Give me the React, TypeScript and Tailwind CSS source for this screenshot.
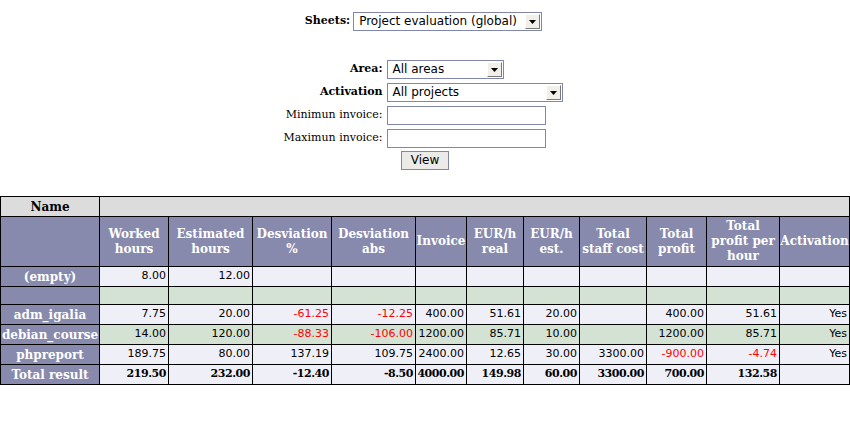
import React from "react";

const serif = "font-['DejaVu_Serif',serif]";
const sans = "font-['DejaVu_Sans',sans-serif]";

function Arrow() {
    return (
        <div className="flex h-full w-[15px] shrink-0 items-center justify-center border border-t-white border-l-white border-r-[#7a7a7a] border-b-[#7a7a7a] bg-[#f1efea]">
            <svg width="7" height="4" viewBox="0 0 7 4">
                <polygon points="0,0 7,0 3.5,4" fill="#000" />
            </svg>
        </div>
    );
}

function FakeSelect({ value, width }: { value: string; width: string }) {
    return (
        <div className={`flex h-[19px] ${width} items-stretch border border-[#7f87ad] bg-white p-px`}>
            <span className={`flex-1 pl-[4px] text-[12px] leading-[15px] text-black ${sans}`}>{value}</span>
            <Arrow />
        </div>
    );
}

const cols = ["Worked hours", "Estimated hours", "Desviation %", "Desviation abs", "Invoice", "EUR/h real", "EUR/h est.", "Total staff cost", "Total profit", "Total profit per hour", "Activation"];

const rows = [
    { name: "(empty)", green: false, h: "h-[20px]", vals: ["8.00", "12.00", "", "", "", "", "", "", "", "", ""] },
    { name: "", green: true, h: "h-[18px]", vals: ["", "", "", "", "", "", "", "", "", "", ""] },
    { name: "adm_igalia", green: false, h: "h-[20px]", vals: ["7.75", "20.00", "-61.25", "-12.25", "400.00", "51.61", "20.00", "", "400.00", "51.61", "Yes"] },
    { name: "debian_course", green: true, h: "h-[20px]", vals: ["14.00", "120.00", "-88.33", "-106.00", "1200.00", "85.71", "10.00", "", "1200.00", "85.71", "Yes"] },
    { name: "phpreport", green: false, h: "h-[20px]", vals: ["189.75", "80.00", "137.19", "109.75", "2400.00", "12.65", "30.00", "3300.00", "-900.00", "-4.74", "Yes"] },
];

const totals = ["219.50", "232.00", "-12.40", "-8.50", "4000.00", "149.98", "60.00", "3300.00", "700.00", "132.58", ""];

const cell = "border-r border-b border-black";
const slate = "bg-[#878aad]";

export default function App() {
    return (
        <div className="w-[850px] min-h-[442px] bg-white text-black">
            {/* sheet selector */}
            <div className="flex items-center justify-center gap-[3px] pt-[12px] pr-[3px]">
                <span className={`text-[11px] font-bold ${serif}`}>Sheets:</span>
                <FakeSelect value="Project evaluation (global)" width="w-[189px]" />
            </div>

            {/* filters */}
            <div className="mt-[29px] flex justify-center">
                <div className="grid grid-cols-[95px_176px] gap-x-[4px] gap-y-[4px] items-center">
                    <span className={`flex justify-end whitespace-nowrap text-[11px] font-bold ${serif}`}>Area:</span>
                    <FakeSelect value="All areas" width="w-[117px]" />
                    <span className={`flex justify-end whitespace-nowrap text-[11px] font-bold ${serif}`}>Activation</span>
                    <FakeSelect value="All projects" width="w-[176px]" />
                    <span className={`flex justify-end whitespace-nowrap text-[11px] ${serif}`}>Minimun invoice:</span>
                    <input className="h-[19px] w-[159px] border border-[#7f87ad] bg-white outline-none" />
                    <span className={`flex justify-end whitespace-nowrap text-[11px] ${serif}`}>Maximun invoice:</span>
                    <input className="h-[19px] w-[159px] border border-[#7f87ad] bg-white outline-none" />
                    <div className="col-span-2 -mt-[1px] flex justify-center">
                        <button className={`h-[19px] w-[48px] border border-[#7f87ad] bg-[#ecebe8] text-[12px] leading-[15px] ${sans}`}>View</button>
                    </div>
                </div>
            </div>

            {/* results */}
            <div className={`mt-[26px] grid w-[850px] grid-cols-[99px_69px_84px_79px_84px_51px_57px_56px_67px_60px_73px_70px] border-l border-t border-black text-[11px] ${sans}`}>
                <div className={`${cell} flex h-[20px] items-center justify-center bg-[#dcdcdc] text-[12px] font-bold ${serif}`}>Name</div>
                <div className={`${cell} col-span-11 bg-[#dcdcdc]`}></div>

                <div className={`${cell} ${slate} h-[50px]`}></div>
                {cols.map((c) => (
                    <div key={c} className={`${cell} ${slate} flex h-[50px] items-center justify-center px-[1px] text-center text-[12px] leading-[15px] font-bold text-white ${serif}`}>
                        {c}
                    </div>
                ))}

                {rows.map((r, i) => (
                    <React.Fragment key={i}>
                        <div className={`${cell} ${slate} ${r.h} flex items-center justify-center whitespace-nowrap text-[12px] font-bold text-white ${serif}`}>{r.name}</div>
                        {r.vals.map((v, j) => (
                            <div
                                key={j}
                                className={`${cell} ${r.h} flex items-center justify-end pr-[2px] ${r.green ? "bg-[#d4e2d4]" : "bg-[#efeff7]"} ${v.startsWith("-") ? "text-[#ff0000]" : "text-black"}`}
                            >
                                {v}
                            </div>
                        ))}
                    </React.Fragment>
                ))}

                <div className={`${cell} ${slate} flex h-[20px] items-center justify-center text-[12px] font-bold text-white ${serif}`}>Total result</div>
                {totals.map((v, j) => (
                    <div key={j} className={`${cell} flex h-[20px] items-center justify-end bg-[#efeff7] pr-[2px] text-[11px] tracking-[-0.45px] font-bold ${serif}`}>
                        {v}
                    </div>
                ))}
            </div>
        </div>
    );
}
